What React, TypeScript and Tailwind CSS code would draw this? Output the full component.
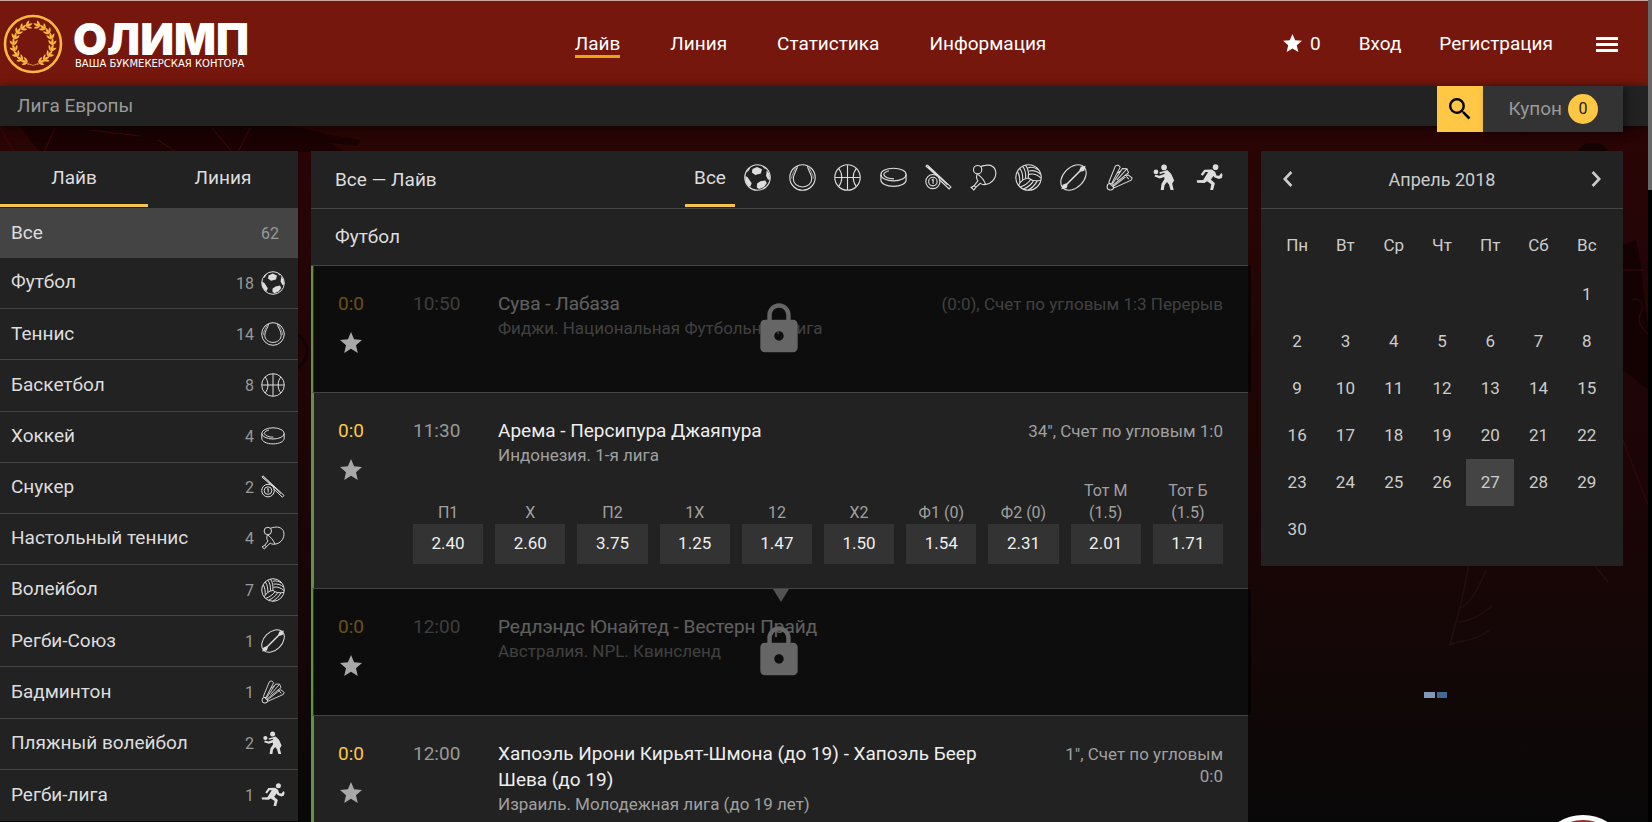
import React from 'react';

type IconName =
  | 'football'
  | 'tennis'
  | 'basketball'
  | 'hockey'
  | 'snooker'
  | 'tableTennis'
  | 'volleyball'
  | 'rugby'
  | 'badminton'
  | 'beach'
  | 'runner';

const drawings: Record<IconName, React.ReactNode> = {
  football: (
    <>
      <circle cx="12" cy="12" r="11.3" />
      <path
        fill="currentColor"
        stroke="none"
        d="M7.5 4.4 11.6 2.6 16 4.6 15 8.4 10 9.8 7 7.6ZM1.2 10.5 3.4 12 6.8 17.2 5.6 20.2 3.4 19 1.2 15ZM11.6 17.4 14.6 15.4 19 14.6 20.2 17 17.6 20.6 13.4 22.2 11.4 20.8ZM20.2 5.6 22.4 8.6 23.2 13.6 21.4 14 19.6 10.4ZM3.2 5 6 2.6 4.4 5.6 2.6 7.6ZM16 1.8 19.4 3.8 18.6 4.4Z"
      />
    </>
  ),
  tennis: (
    <>
      <circle cx="12" cy="12" r="11.3" />
      <path d="M7.6 2C7 5.8 3.8 8.8 3.8 13.2 3.8 17.4 7.4 20.4 12 20.4S20.2 17.4 20.2 13.2C20.2 8.8 17 5.8 16.4 2" />
      <path strokeWidth=".6" d="M6 3C5.2 6 2.4 9 2.3 13M18 3C18.8 6 21.6 9 21.7 13" />
    </>
  ),
  basketball: (
    <>
      <circle cx="12" cy="12" r="11.3" />
      <path d="M12 1V23M1 12H23M4.2 4C7.8 8.6 7.8 15.4 4.2 20M19.8 4C16.2 8.6 16.2 15.4 19.8 20" />
    </>
  ),
  hockey: (
    <>
      <ellipse cx="12" cy="9.4" rx="11.2" ry="5.6" />
      <path d="M.8 9.4V14.2C.8 17.4 5.6 19.9 12 19.9S23.2 17.4 23.2 14.2V9.4M3.2 9.4C4.4 12 8 13.2 12.4 13.2M3.2 9.4C3.8 7.6 5.6 6.6 8 6" />
    </>
  ),
  snooker: (
    <>
      <circle cx="7" cy="15.6" r="6.3" />
      <circle cx="7" cy="15.6" r="3.8" />
      <path d="M6 14.4 7.2 13.6V17.6M2 .8 .9 2 9.6 9.6M2 .8 23 20.4 21.4 22.2 12.6 13.8M2.4 2 20 18.6" />
    </>
  ),
  tableTennis: (
    <>
      <circle cx="6.8" cy="5" r="3.7" />
      <path d="M6.4 8.8C5.4 11.6 5.6 13.4 7 15L3.6 19.4 1 20.8 3.4 23 5.6 20.4 9.2 17.2C11 18.6 14.2 18.6 17.4 17.2 22 14.8 23.8 9.6 22.6 5.6 21.4 2 17.6.6 13.6 1.2 12 1.4 10.4 1.8 9.4 2.4M7 9.2C9.6 11 12.4 14 13.8 18M3.6 19.4 5.6 20.8" />
    </>
  ),
  volleyball: (
    <>
      <circle cx="12" cy="12" r="11.3" />
      <path d="M11.8 12.4C8.4 12.8 5 15.2 3.2 18.8M11.8 12.4C12.4 8.6 11.6 4 9.4 1M11.8 12.4C14.6 14.6 19 15.4 22.8 14.4M9.4 12.8C9.8 8.6 9 4.8 6.8 2.2M6.8 14.4C7 10.4 6.4 6.6 4.4 4.2M4.2 16.8C4.4 13.4 3.8 9.4 2.4 7M12.4 9.2C16 8.4 20.4 9.8 23 12.6M12.6 6.2C16.2 5.4 20.2 6.8 22.4 9M11.8 3.2C15 2.4 18.4 3.4 20.2 5M14 13.8C12 16.6 8.2 19.4 4.6 20.4M16.6 14.8C14.6 18 11 21 7.4 22.2M19.8 15C18 18.4 15 21.4 11.6 23.2" />
    </>
  ),
  rugby: (
    <>
      <ellipse cx="12" cy="12" rx="13.2" ry="9" transform="rotate(-45 12 12)" />
      <path d="M4 20 20 4" strokeWidth="1.4" />
      <path fill="currentColor" stroke="none" d="M1.2 22.4 2.4 18.4 5.6 17.2 6.8 18.4 6 21.4ZM22.8 1.6 18.4 2.4 17.2 5.6 18.4 6.8 21.6 6Z" />
    </>
  ),
  badminton: (
    <>
      <circle cx="3.9" cy="20.2" r="2.9" />
      <path strokeWidth=".9" d="M2.4 16.4 8.4 1.6 10.8 .9 12.6 2.8 5.2 17M5.8 17.6 14.6 4 18.6 4.2 20 7.6 6.8 18.4M7.2 19.4 19.6 9.6 23.2 12.4 22.4 14.4 7.2 21.2M2.4 16.4 7.2 21.2M18.6 4.2 9.6 14.4M9.8 8.4 13.6 5.6M17.4 9.8 20.2 13.4" />
    </>
  ),
  beach: (
    <g fill="currentColor" stroke="none">
      <circle cx="11.6" cy="3" r="2.5" />
      <circle cx="4.4" cy="7" r="2.1" />
      <path d="M11 6.4 14.6 5.4 18 8.8 20.6 14.6 18.8 17.4 20.2 23H17.4L16 18.2 14.2 16 12 18.8 11.4 23H8.6L9.4 17.6 12 13.4 11.8 11.6 7.8 12.8 3.2 11.2 3.8 9.6 7.6 10.4 12.4 8.6 11.6 7.8 8 8.8 7.4 7.4Z" />
    </g>
  ),
  runner: (
    <g fill="currentColor" stroke="none">
      <circle cx="17.4" cy="2.8" r="2.5" />
      <path d="M7.4 5 14 4.8 17 6.8 18.2 10.2 20.6 10.4 22.4 8 23.6 9.4 23 12.4 20.4 13.4 16.6 12 15.6 10.6 13.2 13.8 16.8 17 15.2 23H12.6L13.6 18 9.8 15.4 7.6 16.8 1 16.6 .6 14.4 6.4 14.2 10.8 7.2 8.4 7.2 6 10.4 4.2 9.4Z" />
    </g>
  ),
};

function SportIcon({ name, className }: { name: IconName; className: string }) {
  return (
    <svg viewBox="0 0 24 24" className={className} fill="none" stroke="currentColor" strokeWidth="1" aria-hidden="true">
      {drawings[name]}
    </svg>
  );
}

function Star({ className }: { className: string }) {
  return (
    <svg viewBox="2 2 20 19" className={className} fill="currentColor" aria-hidden="true">
      <path d="M12 17.27 18.18 21l-1.64-7.03L22 9.24l-7.19-.61L12 2 9.19 8.63 2 9.24l5.46 4.73L5.82 21z" />
    </svg>
  );
}

const sports: { name: string; count: number; icon: IconName }[] = [
  { name: 'Футбол', count: 18, icon: 'football' },
  { name: 'Теннис', count: 14, icon: 'tennis' },
  { name: 'Баскетбол', count: 8, icon: 'basketball' },
  { name: 'Хоккей', count: 4, icon: 'hockey' },
  { name: 'Снукер', count: 2, icon: 'snooker' },
  { name: 'Настольный теннис', count: 4, icon: 'tableTennis' },
  { name: 'Волейбол', count: 7, icon: 'volleyball' },
  { name: 'Регби-Союз', count: 1, icon: 'rugby' },
  { name: 'Бадминтон', count: 1, icon: 'badminton' },
  { name: 'Пляжный волейбол', count: 2, icon: 'beach' },
  { name: 'Регби-лига', count: 1, icon: 'runner' },
];

type Match = {
  score: string;
  time: string;
  title: string;
  league: string;
  status?: string;
  locked?: boolean;
  marker?: boolean;
  odds?: [string, string][];
};

const matches: Match[] = [
  {
    score: '0:0',
    time: '10:50',
    title: 'Сува - Лабаза',
    league: 'Фиджи. Национальная Футбольная Лига',
    status: '(0:0), Счет по угловым 1:3 Перерыв',
    locked: true,
  },
  {
    score: '0:0',
    time: '11:30',
    title: 'Арема - Персипура Джаяпура',
    league: 'Индонезия. 1-я лига',
    status: '34", Счет по угловым 1:0',
    odds: [
      ['П1', '2.40'],
      ['Х', '2.60'],
      ['П2', '3.75'],
      ['1Х', '1.25'],
      ['12', '1.47'],
      ['Х2', '1.50'],
      ['Ф1 (0)', '1.54'],
      ['Ф2 (0)', '2.31'],
      ['Тот М (1.5)', '2.01'],
      ['Тот Б (1.5)', '1.71'],
    ],
  },
  {
    score: '0:0',
    time: '12:00',
    title: 'Редлэндс Юнайтед - Вестерн Прайд',
    league: 'Австралия. NPL. Квинсленд',
    locked: true,
    marker: true,
  },
  {
    score: '0:0',
    time: '12:00',
    title: 'Хапоэль Ирони Кирьят-Шмона (до 19) - Хапоэль Беер Шева (до 19)',
    league: 'Израиль. Молодежная лига (до 19 лет)',
    status: '1", Счет по угловым 0:0',
  },
];

const weekdays = ['Пн', 'Вт', 'Ср', 'Чт', 'Пт', 'Сб', 'Вс'];
const weeks: (number | null)[][] = [
  [null, null, null, null, null, null, 1],
  [2, 3, 4, 5, 6, 7, 8],
  [9, 10, 11, 12, 13, 14, 15],
  [16, 17, 18, 19, 20, 21, 22],
  [23, 24, 25, 26, 27, 28, 29],
  [30, null, null, null, null, null, null],
];

const leafAngles = [-68, -50, -32, -14, 4, 22, 40, 58, 74];

function Laurel() {
  const half = leafAngles.map((a) => (
    <g key={a} transform={`rotate(${a} 30 30)`}>
      <path d="M49 30C50.6 27.6 50.8 25.4 49.4 22.6 47.6 25 47.4 27.6 49 30Z" />
      <path d="M49 30C52.2 29 53 27 53.2 24.8 50.6 25.6 49.4 27.2 49 30Z" />
      <path d="M49 30C48.4 27 47 25.4 45 24.8 45.2 27.4 46.4 29.2 49 30Z" />
    </g>
  ));
  return (
    <svg viewBox="0 0 60 60" className="size-[60px] shrink-0" fill="#f9b93c" aria-hidden="true">
      <circle cx="30" cy="30" r="28" fill="none" stroke="#fcb73e" strokeWidth="2.6" />
      <path d="M26 50.4C15 48 10.4 39.6 10.6 30M34 50.4C45 48 49.6 39.6 49.4 30M25 49.6 30 51.4 35 49.6" fill="none" stroke="#f9b93c" strokeWidth=".7" />
      <g>{half}</g>
      <g transform="translate(60 0) scale(-1 1)">{half}</g>
    </svg>
  );
}

function Header() {
  return (
    <header className="relative z-10 grid h-[86px] grid-cols-[1fr_auto_1fr] items-center border-t border-[#cfa6a2] bg-[#75170d] pr-[30px] pl-[3px] text-white">
      <a href="#home" className="flex items-center gap-[10px]">
        <Laurel />
        <span className="flex flex-col gap-[3px] pt-[6px]">
          <span className="font-[Inter] text-[44px] leading-8 font-black">ОЛИМП</span>
          <span className="pl-[2px] font-['DejaVu_Sans'] text-[10px] leading-3">ВАША БУКМЕКЕРСКАЯ КОНТОРА</span>
        </span>
      </a>
      <nav className="flex gap-[50px] pt-1 leading-[22px]">
        <a href="#live" className="border-b-[3px] border-[#e6a512]">Лайв</a>
        <a href="#line">Линия</a>
        <a href="#stats">Статистика</a>
        <a href="#info">Информация</a>
      </nav>
      <div className="flex items-center justify-end gap-[38px] pt-px">
        <a href="#favourites" className="flex items-center gap-2">
          <Star className="mb-[3px] h-[18px] w-[19px]" />
          <span>0</span>
        </a>
        <a href="#login">Вход</a>
        <a href="#signup">Регистрация</a>
        <button type="button" aria-label="Меню" className="ml-[5px] flex w-[22px] flex-col gap-[3px]">
          <span className="h-[3px] bg-white" />
          <span className="h-[3px] bg-white" />
          <span className="h-[3px] bg-white" />
        </button>
      </div>
    </header>
  );
}

function SubBar() {
  return (
    <div className="relative z-10 flex h-10 items-start bg-[#222] pr-[25px] pl-[17px] text-[#999] shadow-[0_2px_10px_rgba(0,0,0,0.6)]">
      <a href="#europa" className="flex-1 leading-10">Лига Европы</a>
      <button type="button" aria-label="Поиск" className="flex size-[46px] items-center justify-center bg-[#ffc743] text-black">
        <svg viewBox="3 3 18 18" className="size-[22px]" fill="currentColor" aria-hidden="true">
          <path d="M15.5 14h-.79l-.28-.27A6.471 6.471 0 0 0 16 9.5 6.5 6.5 0 1 0 9.5 16c1.61 0 3.09-.59 4.23-1.57l.27.28v.79l5 4.99L20.49 19l-4.99-5zm-6 0C7.01 14 5 11.99 5 9.5S7.01 5 9.5 5 14 7.01 14 9.5 11.99 14 9.5 14z" />
        </svg>
      </button>
      <button type="button" className="flex h-[46px] w-[140px] items-center justify-end gap-[6px] bg-[#333] pr-[25px] shadow-[4px_2px_8px_rgba(0,0,0,0.4)]">
        Купон
        <span className="flex size-[30px] items-center justify-center rounded-full bg-[#ffc743] text-base text-[#222]">0</span>
      </button>
    </div>
  );
}

function Sidebar() {
  return (
    <aside className="w-[298px] shrink-0 self-start bg-[#222] text-[#ddd]">
      <div className="flex h-[57px]">
        <button type="button" className="mb-px w-[148px] border-b-[3px] border-[#f5c450] pt-[2px]">Лайв</button>
        <button type="button" className="mb-px flex-1 border-b-[3px] border-transparent pt-[2px]">Линия</button>
      </div>
      <a href="#all" className="flex h-[50px] items-center justify-between bg-[#444] pr-[19px] pl-[11px]">
        Все
        <span className="pt-[2px] text-base text-[#999]">62</span>
      </a>
      <ul className="grid h-[563px] auto-rows-fr">
        {sports.map((s) => (
          <li key={s.name} className="border-b border-[#444] last:border-b-0">
            <a href="#sport" className="flex h-full items-center pr-[13px] pb-px pl-[11px]">
              <span className="flex-1">{s.name}</span>
              <span className="mr-[7px] pt-[2px] text-base text-[#999]">{s.count}</span>
              <SportIcon name={s.icon} className="size-6" />
            </a>
          </li>
        ))}
      </ul>
    </aside>
  );
}

function MatchRow({ match }: { match: Match }) {
  return (
    <article className="relative min-h-[127px] border-b border-l-[3px] border-b-[#444] border-l-[#5f9440] pt-[25px] pr-[25px] pb-6 pl-6">
      {match.marker && (
        <span className="absolute top-0 left-1/2 -translate-x-1/2 border-x-8 border-t-[13px] border-x-transparent border-t-[#ccc]" />
      )}
      <div className="flex leading-[26px]">
        <div className="w-[75px] shrink-0">
          <div className="text-[#ffc743]">{match.score}</div>
          <button type="button" aria-label="В избранное" className="relative z-10 mt-[15px] ml-[2px] block text-[#a8a8a8]">
            <Star className="h-[21px] w-[22px]" />
          </button>
        </div>
        <div className="w-[85px] shrink-0 text-[#999]">{match.time}</div>
        <div className="flex flex-1 gap-12">
          <div className="grow">
            <h3 className="text-[#eee]">{match.title}</h3>
            <p className="text-[17px] leading-[23px] text-[#a0a0a0]">{match.league}</p>
          </div>
          {match.status && <div className="pt-[2px] text-right text-[17px] leading-[22px] text-[#a0a0a0]">{match.status}</div>}
        </div>
      </div>
      {match.odds && (
        <div className="ml-[75px] grid grid-cols-10 gap-3">
          {match.odds.map(([label, value]) => (
            <div key={label} className="flex flex-col justify-end text-center">
              <div className="px-2 text-base leading-[22px] text-[#a0a0a0]">{label}</div>
              <button type="button" className="h-10 bg-[#333] text-[17px] text-[#eee]">{value}</button>
            </div>
          ))}
        </div>
      )}
      {match.locked && (
        <div className="absolute inset-y-0 -right-[3px] -left-px flex items-center justify-center bg-black/60 pr-[6px]">
          <svg viewBox="0 0 24 24" className="size-14 text-[#666]" fill="currentColor" aria-hidden="true">
            <path d="M18 8h-1V6c0-2.76-2.24-5-5-5S7 3.24 7 6v2H6c-1.1 0-2 .9-2 2v10c0 1.1.9 2 2 2h12c1.1 0 2-.9 2-2V10c0-1.1-.9-2-2-2zm-6 9c-1.1 0-2-.9-2-2s.9-2 2-2 2 .9 2 2-.9 2-2 2zm3.1-9H8.9V6c0-1.71 1.39-3.1 3.1-3.1 1.71 0 3.1 1.39 3.1 3.1v2z" />
          </svg>
        </div>
      )}
    </article>
  );
}

function Matches() {
  return (
    <main className="min-w-0 flex-1 self-start bg-[#222] text-[#ddd]">
      <div className="flex h-[58px] items-stretch border-b border-[#444] pr-4 pl-6">
        <h1 className="flex-1 self-center pt-[2px]">Все — Лайв</h1>
        <button type="button" className="mb-px w-[50px] border-b-[3px] border-[#f5c450] pt-px">Все</button>
        <div className="grid w-[497px] grid-cols-11">
          {sports.map((s) => (
            <button key={s.name} type="button" aria-label={s.name} className="flex items-center justify-center pb-1">
              <SportIcon name={s.icon} className="size-[27px]" />
            </button>
          ))}
        </div>
      </div>
      <h2 className="h-[57px] border-b border-[#444] pl-6 leading-[56px]">Футбол</h2>
      {matches.map((m) => (
        <MatchRow key={m.title} match={m} />
      ))}
    </main>
  );
}

function Chevron({ d }: { d: string }) {
  return (
    <svg viewBox="0 0 10 16" className="h-4 w-[10px]" fill="none" stroke="currentColor" strokeWidth="2.6" aria-hidden="true">
      <path d={d} />
    </svg>
  );
}

function Calendar() {
  return (
    <section className="w-[362px] shrink-0 self-start bg-[#222] text-[17px] text-[#ccc]">
      <div className="flex h-[58px] items-center justify-between border-b border-[#444] px-[22px]">
        <button type="button" aria-label="Предыдущий месяц" className="pb-[2px]">
          <Chevron d="M8.4 1 1.8 8l6.6 7" />
        </button>
        <h2 className="text-lg">Апрель 2018</h2>
        <button type="button" aria-label="Следующий месяц" className="pb-[2px]">
          <Chevron d="M1.6 1 8.2 8l-6.6 7" />
        </button>
      </div>
      <div className="px-3 pt-3 pb-[13px]">
        <table className="w-full table-fixed text-center">
          <thead>
            <tr className="h-[50px]">
              {weekdays.map((d) => (
                <th key={d} className="p-0 font-normal">{d}</th>
              ))}
            </tr>
          </thead>
          <tbody>
            {weeks.map((w, i) => (
              <tr key={i} className="h-[47px]">
                {w.map((d, j) => (
                  <td key={j} className={d === 27 ? 'bg-[#444] p-0' : 'p-0'}>
                    {d !== null && <button type="button" className="h-[47px] w-full">{d}</button>}
                  </td>
                ))}
              </tr>
            ))}
          </tbody>
        </table>
      </div>
    </section>
  );
}

function Backdrop() {
  return (
    <svg className="absolute inset-0 size-full" viewBox="0 0 1648 822" preserveAspectRatio="none" fill="none" aria-hidden="true">
      <path fill="#1a0203" d="M20 126H290L330 135 360 140 358 146 330 143 345 152H40L30 140Z" />
      <path stroke="#40080a" d="M0 128 14 152M55 128 44 152M212 128 232 152M250 128 238 152M158 140 176 152M90 130 140 136" />
      <path fill="#140203" d="M1578 152C1582 140 1600 140 1608 150L1620 170V152ZM1623 245 1636 240 1640 260 1648 330V390L1623 370Z" />
      <path stroke="#3a080a" d="M1632 300C1640 296 1646 305 1640 315 1636 325 1646 330 1648 335M1623 440 1648 505M1623 270H1645" />
      <path stroke="#221010" strokeWidth="1.5" d="M1468 566C1466 590 1456 620 1450 645C1460 640 1474 642 1490 630M1486 570C1478 590 1470 604 1460 608M1458 622C1470 622 1482 614 1492 606M1595 566 1608 582" />
      <path stroke="#12000a" strokeWidth="3" d="M298 335C312 345 308 360 298 368" />
    </svg>
  );
}

export default function App() {
  return (
    <div className="flex h-screen overflow-hidden bg-black font-['Roboto',sans-serif] text-[19px]">
      <div className="relative min-w-0 flex-1 overflow-hidden bg-linear-to-b from-[#2e0404] via-[#1a0506] via-65% to-[#090808]">
        <Backdrop />
        <Header />
        <SubBar />
        <div className="relative flex gap-[13px] pt-[25px] pr-[25px]">
          <Sidebar />
          <Matches />
          <Calendar />
        </div>
        <div className="absolute top-[692px] right-[201px] flex gap-[2px]">
          <span className="h-[6px] w-[11px] bg-[#8199b6]" />
          <span className="h-[6px] w-[10px] bg-[#426894]" />
        </div>
        <button
          type="button"
          aria-label="Онлайн-чат"
          className="absolute right-[19px] -bottom-[85px] size-[92px] rounded-full border-[5px] border-white bg-[#9c2a22]"
        />
      </div>
      <div className="w-1 bg-black">
        <div className="h-[190px] bg-[#686868]" />
      </div>
    </div>
  );
}
